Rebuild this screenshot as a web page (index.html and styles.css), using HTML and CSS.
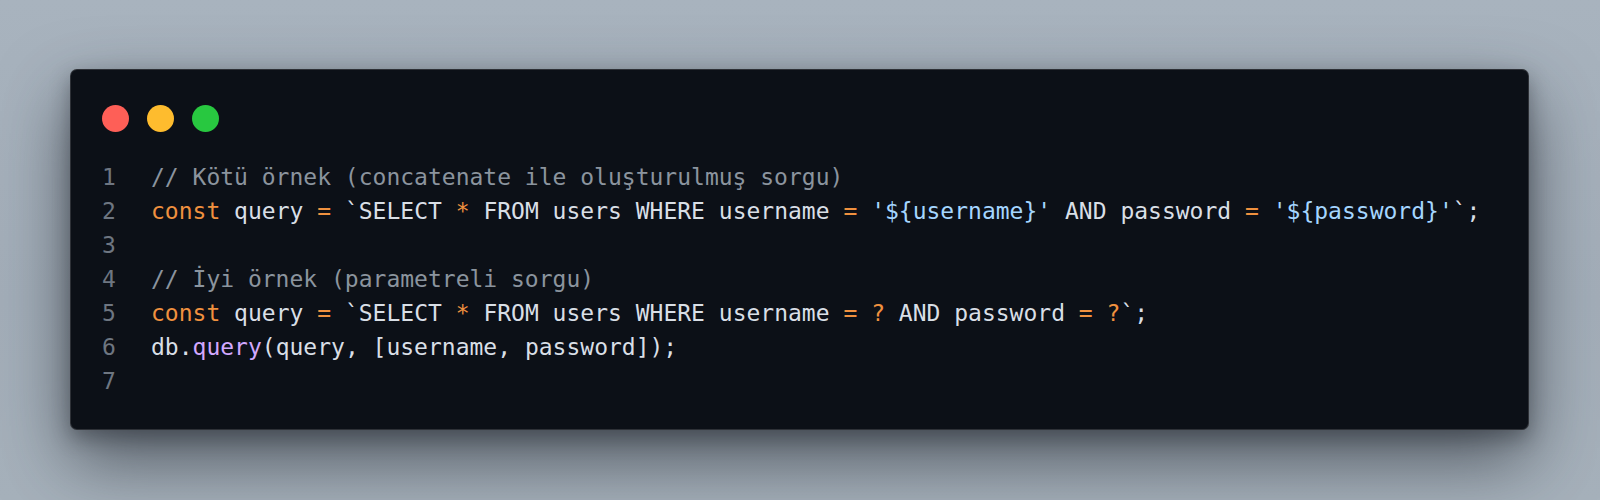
FILE: index.html
```html
<!DOCTYPE html>
<html lang="tr">
<head>
<meta charset="utf-8">
<title>Kod</title>
<link rel="stylesheet" href="styles.css">
</head>
<body>
<main class="stage">
  <section class="window">
    <div class="dots">
      <span class="dot red"></span>
      <span class="dot yellow"></span>
      <span class="dot green"></span>
    </div>
    <div class="code">
      <div class="line"><span class="ln">1</span><span class="src"><span class="c">// Kötü örnek (concatenate ile oluşturulmuş sorgu)</span></span></div>
      <div class="line"><span class="ln">2</span><span class="src"><span class="k">const</span> query <span class="o">=</span> `SELECT <span class="o">*</span> FROM users WHERE username <span class="o">=</span> <span class="s">'${username}'</span> AND password <span class="o">=</span> <span class="s">'${password}'</span>`;</span></div>
      <div class="line"><span class="ln">3</span><span class="src"></span></div>
      <div class="line"><span class="ln">4</span><span class="src"><span class="c">// İyi örnek (parametreli sorgu)</span></span></div>
      <div class="line"><span class="ln">5</span><span class="src"><span class="k">const</span> query <span class="o">=</span> `SELECT <span class="o">*</span> FROM users WHERE username <span class="o">=</span> <span class="o">?</span> AND password <span class="o">=</span> <span class="o">?</span>`;</span></div>
      <div class="line"><span class="ln">6</span><span class="src">db.<span class="f">query</span>(query, [username, password]);</span></div>
      <div class="line"><span class="ln">7</span><span class="src"></span></div>
    </div>
  </section>
</main>
</body>
</html>
```

FILE: styles.css
```css
html, body {
  margin: 0;
  padding: 0;
}
body {
  width: 1600px;
  height: 500px;
  overflow: hidden;
  background: linear-gradient(180deg, #a8b3be 0%, #a3aeb9 60%, #a6b1bb 100%);
}
.stage {
  padding: 69px 0 0 70px;
}
.window {
  width: 1459px;
  box-sizing: border-box;
  background: #0c1017;
  border: 1px solid rgba(255, 255, 255, 0.14);
  border-radius: 7px;
  padding: 35px 0 31px 31px;
  box-shadow: 0 30px 70px rgba(30, 36, 44, 0.62), 0 8px 20px rgba(20, 24, 30, 0.35);
}
.dots {
  display: flex;
  gap: 18px;
  height: 27px;
}
.dot {
  width: 27px;
  height: 27px;
  border-radius: 50%;
}
.red { background: #fe5f57; }
.yellow { background: #febc2e; }
.green { background: #28c840; }
.code {
  margin-top: 28px;
  font-family: "DejaVu Sans Mono", monospace;
  font-size: 23px;
  line-height: 34px;
  color: #d9dfe6;
}
.line {
  display: flex;
  height: 34px;
}
.ln {
  width: 49px;
  flex: none;
  color: #6e7681;
}
.src {
  white-space: pre;
}
.c { color: #8b949e; }
.k { color: #f0913f; }
.o { color: #f0913f; }
.s { color: #a5d6ff; }
.f { color: #d2a8ff; }
```
